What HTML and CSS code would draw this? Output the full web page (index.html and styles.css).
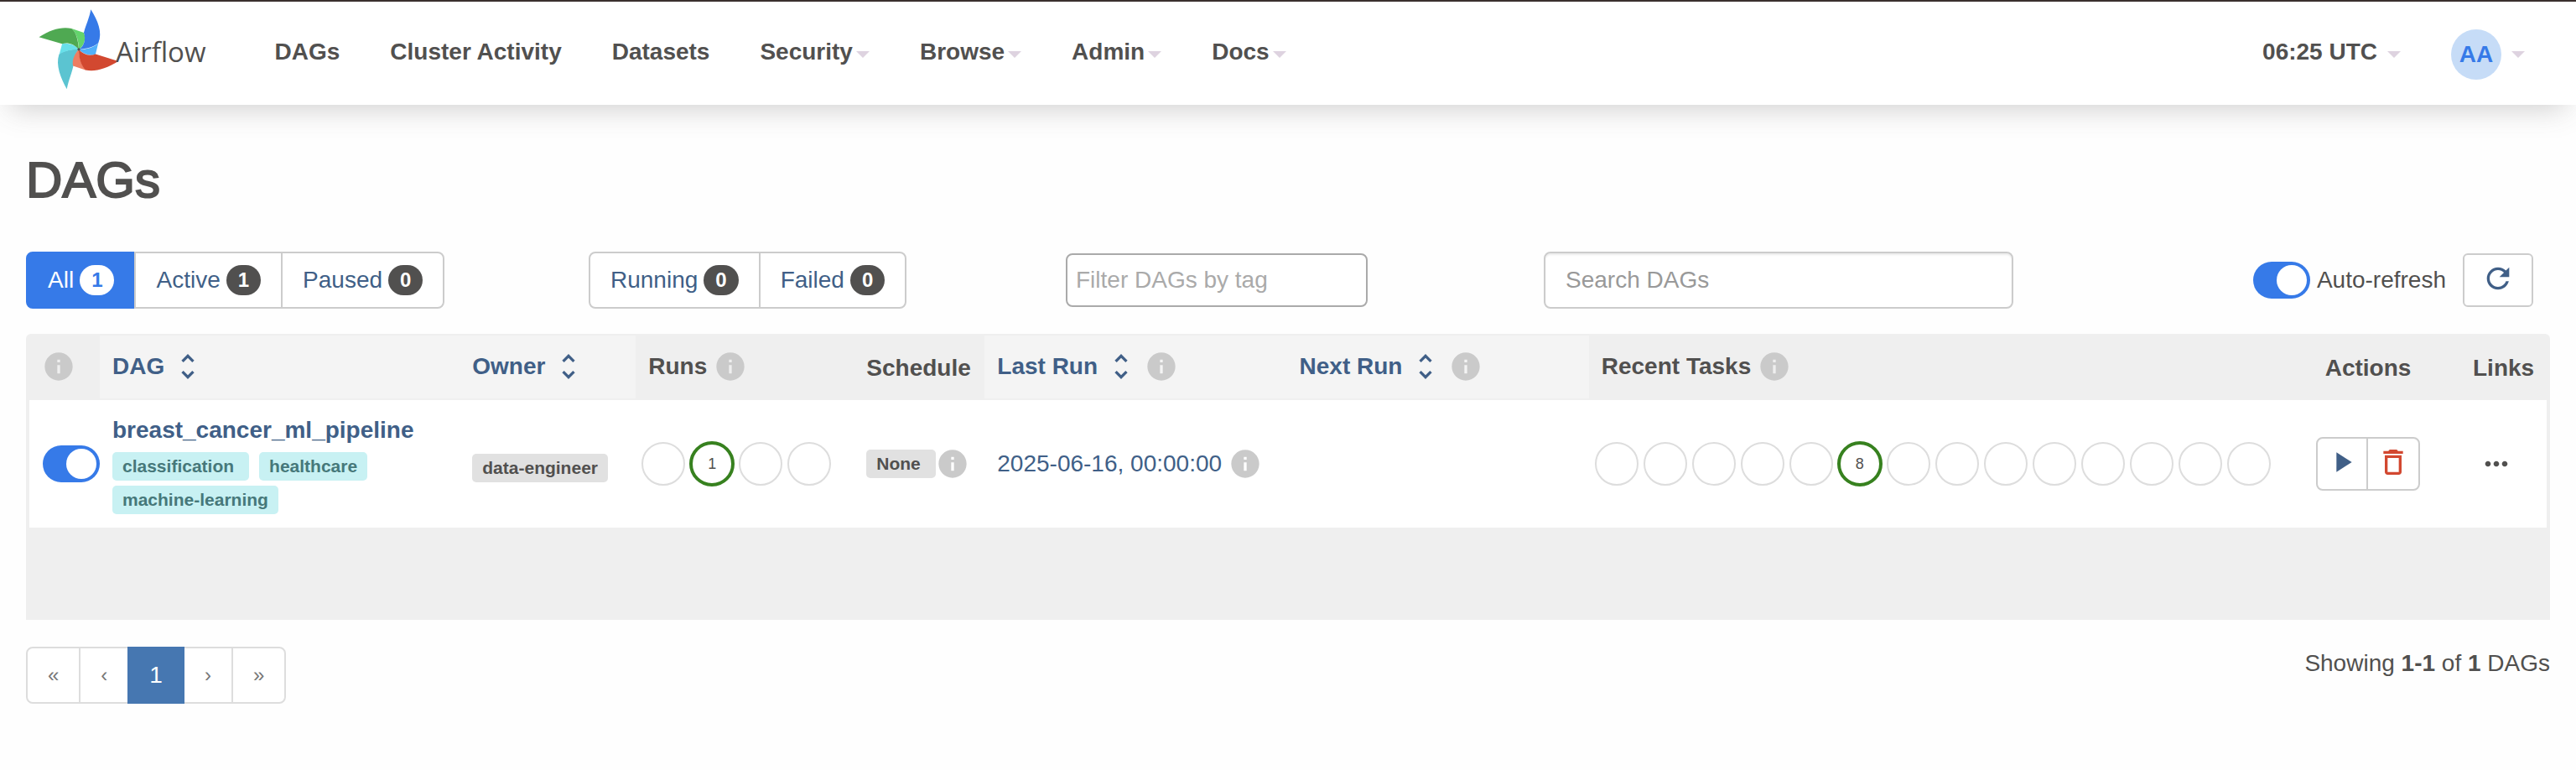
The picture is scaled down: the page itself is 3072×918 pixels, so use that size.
FILE: index.html
```html
<!DOCTYPE html>
<html lang="en">
<head>
<meta charset="utf-8">
<title>DAGs - Airflow</title>
<link rel="stylesheet" href="styles.css">
</head>
<body>
<svg class="defs" aria-hidden="true">
  <symbol id="info" viewBox="0 0 24 24"><path d="M12 2C6.48 2 2 6.48 2 12s4.480 10 10 10 10-4.480 10-10S17.520 2 12 2zm1 15h-2v-6h2v6zm0-8h-2V7h2v2z"/></symbol>
  <symbol id="sort" viewBox="0 0 24 24"><path d="M12 5.830L15.170 9l1.410-1.410L12 3 7.410 7.590 8.830 9 12 5.830zm0 12.340L8.830 15l-1.410 1.410L12 21l4.590-4.590L15.170 15 12 18.170z"/></symbol>
</svg>
<header class="navbar">
  <a class="brand" href="#">
    <svg class="pinwheel" viewBox="50 25 288 292" aria-hidden="true">
      <path fill="#5bc4d1" d="M194 172C164 172 138 178 123 190C110 228 129 276 151 315C158 280 170 256 176 224C172 206 184 186 194 172Z"/>
      <path fill="#68e0ea" d="M194 172C186 160 158 146 134 152L124 190C142 178 168 173 194 172Z"/>
      <path fill="#63d46c" d="M194 172C194 140 184 110 168 97L212 112C222 134 212 160 194 172Z"/>
      <path fill="#4fa952" d="M51 128C94 100 132 90 168 97C184 108 192 140 194 172C178 153 154 146 134 152Z"/>
      <path fill="#52b1fa" d="M194 172C226 172 250 164 264 149L254 190C236 197 208 190 194 172Z"/>
      <path fill="#367ae8" d="M237 29C262 68 280 112 264 149C246 164 222 170 194 172C214 160 220 134 212 112C220 82 232 60 237 29Z"/>
      <path fill="#ee7d62" d="M194 172C196 204 202 230 220 247L173 231C169 208 180 188 194 172Z"/>
      <path fill="#d24830" d="M336 215C292 242 250 254 218 246C202 230 194 204 194 172C208 190 232 198 254 189Z"/>
      <circle cx="194" cy="172" r="5" fill="#51504f"/>
    </svg>
    <span class="brand-name">Airflow</span>
  </a>
  <nav class="menu">
    <a class="menu-item" href="#">DAGs</a>
    <a class="menu-item" href="#">Cluster Activity</a>
    <a class="menu-item" href="#">Datasets</a>
    <button class="menu-item" type="button">Security<i class="caret"></i></button>
    <button class="menu-item" type="button">Browse<i class="caret"></i></button>
    <button class="menu-item" type="button">Admin<i class="caret"></i></button>
    <button class="menu-item" type="button">Docs<i class="caret"></i></button>
  </nav>
  <div class="account">
    <button class="menu-item spaced" type="button">06:25 UTC<i class="caret"></i></button>
    <button class="menu-item spaced" type="button"><span class="avatar">AA</span><i class="caret"></i></button>
  </div>
</header>
<main class="page">
  <h1 class="title">DAGs</h1>
  <div class="filters">
    <div class="group">
      <a class="btn active" href="#">All<span class="badge">1</span></a>
      <a class="btn" href="#">Active<span class="badge">1</span></a>
      <a class="btn" href="#">Paused<span class="badge">0</span></a>
    </div>
    <div class="group">
      <a class="btn" href="#">Running<span class="badge">0</span></a>
      <a class="btn" href="#">Failed<span class="badge">0</span></a>
    </div>
    <input class="field tag-filter" type="text" placeholder="Filter DAGs by tag" aria-label="Filter DAGs by tag">
    <input class="field search" type="text" placeholder="Search DAGs" aria-label="Search DAGs">
    <div class="refresh">
      <label class="auto"><input class="switch" type="checkbox" checked>Auto-refresh</label>
      <button class="icon-btn refresh-btn" type="button" aria-label="Refresh"><svg class="icon" viewBox="0 0 24 24"><path d="M17.650 6.350C16.200 4.900 14.210 4 12 4c-4.420 0-7.990 3.580-7.990 8s3.570 8 7.990 8c3.730 0 6.840-2.550 7.730-6h-2.080c-.820 2.330-3.040 4-5.650 4-3.310 0-6-2.690-6-6s2.690-6 6-6c1.660 0 3.140.690 4.220 1.780L13 11h7V4l-2.350 2.350z"/></svg></button>
    </div>
  </div>
  <div class="table-wrap">
    <table class="dags">
      <colgroup><col class="c-toggle"><col class="c-dag"><col class="c-owner"><col class="c-runs"><col class="c-schedule"><col class="c-date"><col class="c-date"><col><col class="c-actions"><col class="c-links"></colgroup>
      <thead>
        <tr>
          <th><svg class="info"><use href="#info"/></svg></th>
          <th class="sortable"><a class="head" href="#">DAG<svg class="icon"><use href="#sort"/></svg></a></th>
          <th class="sortable"><a class="head" href="#">Owner<svg class="icon"><use href="#sort"/></svg></a></th>
          <th><span class="head">Runs<svg class="info"><use href="#info"/></svg></span></th>
          <th class="plain">Schedule</th>
          <th class="sortable"><span class="head"><a class="head" href="#">Last Run<svg class="icon"><use href="#sort"/></svg></a><svg class="info"><use href="#info"/></svg></span></th>
          <th class="sortable"><span class="head"><a class="head" href="#">Next Run<svg class="icon"><use href="#sort"/></svg></a><svg class="info"><use href="#info"/></svg></span></th>
          <th><span class="head">Recent Tasks<svg class="info"><use href="#info"/></svg></span></th>
          <th class="plain center">Actions</th>
          <th class="plain">Links</th>
        </tr>
      </thead>
      <tbody>
        <tr>
          <td class="toggle-cell"><input class="switch" type="checkbox" checked aria-label="Pause or unpause breast_cancer_ml_pipeline"></td>
          <td>
            <a class="dag-name" href="#">breast_cancer_ml_pipeline</a>
            <div class="tags"><a class="tag teal spaced-end" href="#">classification</a><a class="tag teal" href="#">healthcare</a><a class="tag teal" href="#">machine-learning</a></div>
          </td>
          <td class="owner-cell"><a class="tag" href="#">data-engineer</a></td>
          <td class="states-cell"><div class="states"><span class="state"></span><a class="state success" href="#">1</a><span class="state"></span><span class="state"></span></div></td>
          <td><div class="inline"><a class="tag spaced-end" href="#">None</a><svg class="info"><use href="#info"/></svg></div></td>
          <td><div class="inline date"><a href="#">2025-06-16, 00:00:00</a><svg class="info"><use href="#info"/></svg></div></td>
          <td></td>
          <td class="states-cell"><div class="states"><span class="state"></span><span class="state"></span><span class="state"></span><span class="state"></span><span class="state"></span><a class="state success" href="#">8</a><span class="state"></span><span class="state"></span><span class="state"></span><span class="state"></span><span class="state"></span><span class="state"></span><span class="state"></span><span class="state"></span></div></td>
          <td class="center"><div class="group actions">
            <button class="icon-btn" type="button" aria-label="Trigger DAG"><svg class="icon" viewBox="0 0 24 24"><path d="M8 5v14l11-7z"/></svg></button>
            <button class="icon-btn danger" type="button" aria-label="Delete DAG"><svg class="icon" viewBox="0 0 24 24"><path d="M6 19c0 1.100.9 2 2 2h8c1.100 0 2-.9 2-2V7H6v12zM8 9h8v10H8V9zm7.500-5l-1-1h-5l-1 1H5v2h14V4h-3.500z"/></svg></button>
          </div></td>
          <td><button class="more" type="button" aria-label="Links"><svg class="icon" viewBox="0 0 24 24"><path d="M6 10c-1.100 0-2 .9-2 2s.9 2 2 2 2-.9 2-2-.9-2-2-2zm12 0c-1.100 0-2 .9-2 2s.9 2 2 2 2-.9 2-2-.9-2-2-2zm-6 0c-1.100 0-2 .9-2 2s.9 2 2 2 2-.9 2-2-.9-2-2-2z"/></svg></button></td>
        </tr>
      </tbody>
    </table>
  </div>
  <footer class="foot">
    <nav class="group pager" aria-label="Pages">
      <a class="page-link" href="#">«</a>
      <a class="page-link" href="#">‹</a>
      <a class="page-link current" href="#">1</a>
      <a class="page-link" href="#">›</a>
      <a class="page-link" href="#">»</a>
    </nav>
    <p class="count">Showing <strong>1-1</strong> of <strong>1</strong> DAGs</p>
  </footer>
</main>
</body>
</html>
```
FILE: styles.css
```css
:root {
  --text: #51504f;
  --link: #405f87;
  --blue: #367ae8;
  --line: #ccc;
  --shade: #efefef;
}
* { box-sizing: border-box; }
body {
  margin: 0;
  background: #fefefe;
  color: var(--text);
  font: 28px/40px "Liberation Sans", Arial, sans-serif;
}
a { color: var(--link); text-decoration: none; }
button, input { font: inherit; color: inherit; margin: 0; }
button { cursor: pointer; }
.defs { display: none; }

.navbar {
  display: flex;
  align-items: center;
  padding: 4px 31px 8px 46px;
  border-top: 2px solid #3a302e;
  background: #fff;
  box-shadow: 0 16px 32px -12px rgba(81, 80, 79, .28);
}
.brand { display: flex; align-items: center; margin-right: 52px; color: var(--text); }
.pinwheel { width: 96px; height: 97px; margin: 4px -4px 10px 0; }
.brand-name { font: 33px/40px "Open Sans", "Noto Sans", sans-serif; }
.menu, .account { display: flex; align-items: center; }
.account { margin-left: auto; }
.menu-item {
  display: flex;
  align-items: center;
  gap: 4px;
  padding: 0 30px;
  border: 0;
  background: none;
  color: var(--text);
  font-weight: bold;
}
.menu-item.spaced { gap: 12px; }
.caret {
  margin-top: 6px;
  border: 8px solid transparent;
  border-top-color: #ded3e0;
  border-bottom: 0;
}
.avatar {
  width: 60px;
  margin-top: 6px;
  border-radius: 50%;
  background: #c6dcf7;
  color: var(--blue);
  line-height: 60px;
  text-align: center;
}

.page { padding: 57px 31px 32px; }
.title { margin: 0 0 52px; font-size: 60px; font-weight: normal; line-height: 66px; -webkit-text-stroke: 2px var(--text); }

.filters {
  display: grid;
  grid-template-columns: 671fr 569fr 570fr 570fr 630fr;
  align-items: center;
  margin-bottom: 30px;
}
.group { display: flex; }
.group > * + * { margin-left: -2px; }
.group > :first-child { border-radius: 8px 0 0 8px; }
.group > :last-child { border-radius: 0 8px 8px 0; }
.btn {
  display: flex;
  align-items: center;
  gap: 7px;
  padding: 12px 24px;
  border: 2px solid var(--line);
  background: #fff;
}
.badge {
  padding: 6px 14px;
  border-radius: 20px;
  background: var(--text);
  color: #fff;
  font-size: 24px;
  font-weight: bold;
  line-height: 24px;
}
.btn.active { border-color: var(--blue); background: var(--blue); color: #fff; }
.btn.active .badge { background: #fff; color: var(--blue); }
.field { border: 2px solid var(--line); border-radius: 8px; background: #fff; }
.field::placeholder { color: #999; opacity: 1; }
.tag-filter { width: 360px; height: 64px; padding: 0 10px; border-color: #aaa; }
.tag-filter::placeholder { color: #aaa; }
.search { width: 560px; height: 68px; padding: 0 24px; box-shadow: inset 0 2px 2px rgba(0, 0, 0, .075); }
.refresh { display: flex; align-items: center; justify-content: flex-end; gap: 20px; padding-right: 20px; }
.auto { display: flex; align-items: center; gap: 8px; }
.switch {
  flex: none;
  display: block;
  appearance: none;
  width: 68px;
  height: 44px;
  padding: 4px;
  border-radius: 22px;
  background: var(--blue);
}
.switch::before {
  content: "";
  display: block;
  width: 36px;
  height: 36px;
  margin-left: auto;
  border-radius: 50%;
  background: #fff;
}
.icon-btn {
  display: flex;
  align-items: center;
  justify-content: center;
  width: 62px;
  height: 64px;
  padding: 0;
  border: 2px solid var(--line);
  border-radius: 6px;
  background: #fff;
  color: var(--link);
}
.refresh-btn { width: 84px; padding-bottom: 4px; }
.icon, .info { display: block; flex: none; width: 40px; height: 40px; fill: currentColor; }
.info { fill: #cacaca; }

.table-wrap { padding: 2px 4px 110px; border-radius: 6px 6px 0 0; background: var(--shade); }
.dags { width: 100%; table-layout: fixed; border-collapse: collapse; }
.c-toggle { width: 84px; }
.c-dag { width: 14.3%; }
.c-owner { width: 210px; }
.c-runs { width: 260px; }
.c-schedule { width: 156px; }
.c-date { width: 12%; }
.c-actions { width: 220px; }
.c-links { width: 103px; }
th { padding: 17px 0 18px 15px; text-align: left; vertical-align: bottom; }
th.plain { padding-bottom: 16px; }
thead tr { border-bottom: 2px solid var(--shade); }
.sortable { background: #f4f4f4; }
.head { display: flex; align-items: center; gap: 8px; }
th.center { padding-left: 0; text-align: center; }
td { padding: 16px 0 16px 15px; background: #fff; }
td.center { padding-left: 0; }
td.toggle-cell { padding-left: 16px; }
td.owner-cell { padding-top: 22px; }
td.states-cell { padding-left: 7px; }
.dag-name { display: block; font-weight: bold; }
.tags { display: flex; flex-wrap: wrap; gap: 6px 12px; margin-top: 6px; }
.tag {
  display: inline-block;
  padding: 0 12px;
  border-radius: 5px;
  background: #e1e1e1;
  color: var(--text);
  font-size: 21px;
  font-weight: bold;
  line-height: 34px;
}
.tag.spaced-end { padding-right: 18px; }
.tag.teal { background: #c8f1f3; color: #46787a; }
.inline { display: flex; align-items: center; }
.date { gap: 8px; }
.states { display: flex; align-items: center; gap: 6px; }
.state {
  flex: none;
  width: 52px;
  height: 52px;
  border: 2px solid #ddd;
  border-radius: 50%;
}
.state.success {
  width: 54px;
  height: 54px;
  margin: -1px;
  border: 4px solid #37811f;
  color: var(--text);
  font-size: 18px;
  line-height: 46px;
  text-align: center;
}
.actions { justify-content: center; }
.danger { width: 64px; color: #d24830; }
.actions .icon { margin-bottom: 4px; }
.more { display: block; padding: 0 8px; border: 0; background: none; }

.foot { display: flex; justify-content: space-between; margin-top: 32px; }
.page-link { padding: 12px 24px; border: 2px solid #ddd; background: #fff; color: #777; font-size: 24px; }
.page-link.current { z-index: 1; border-color: #4677b1; background: #4677b1; color: #fff; font-size: 28px; }
.count { margin: 0; }
```
